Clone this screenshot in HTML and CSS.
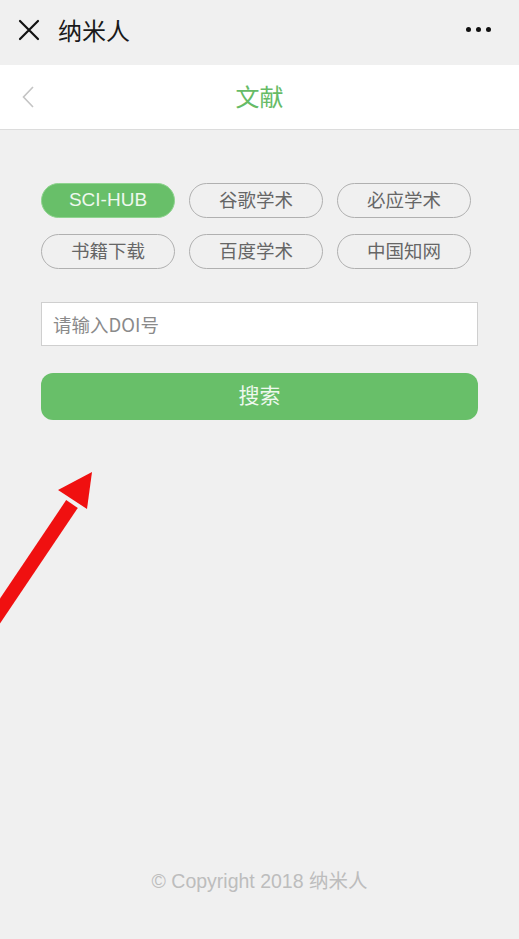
FILE: index.html
```html
<!DOCTYPE html>
<html lang="zh">
<head>
<meta charset="utf-8">
<title>文献</title>
<link rel="stylesheet" href="styles.css">
</head>
<body>
<div class="page">
  <header class="topbar">
    <svg class="close" width="22" height="22" viewBox="0 0 22 22"><path d="M2 2 L20 20 M20 2 L2 20" stroke="#111" stroke-width="2.2" stroke-linecap="round"/></svg>
    <span class="app-title">纳米人</span>
    <span class="more"><i></i><i></i><i></i></span>
  </header>
  <nav class="navbar">
    <svg class="back" width="12" height="22" viewBox="0 0 12 22"><path d="M11 1 L1.5 11 L11 21" fill="none" stroke="#c4c4c4" stroke-width="1.6"/></svg>
    <span class="nav-title">文献</span>
  </nav>
  <main class="content">
    <div class="sources">
      <button class="chip active">SCI-HUB</button>
      <button class="chip">谷歌学术</button>
      <button class="chip">必应学术</button>
      <button class="chip">书籍下载</button>
      <button class="chip">百度学术</button>
      <button class="chip">中国知网</button>
    </div>
    <input class="doi" type="text" placeholder="请输入DOI号">
    <button class="search">搜索</button>
  </main>
  <footer class="footer">© Copyright 2018 纳米人</footer>
  <svg class="arrow" width="100" height="160" viewBox="0 0 100 160">
    <path d="M-6 150 L72 34" stroke="#f01010" stroke-width="14" stroke-linecap="butt"/>
    <polygon points="92,2 58,20 87,39" fill="#f01010"/>
  </svg>
</div>
</body>
</html>
```
FILE: styles.css
```css
* { box-sizing: border-box; }
html, body { margin: 0; padding: 0; }
body {
  background: #f0f0f0;
  font-family: "Noto Sans CJK SC", "Noto Sans", sans-serif;
}
.page {
  position: relative;
  width: 519px;
  height: 939px;
  display: flex;
  flex-direction: column;
  overflow: hidden;
  background: #f0f0f0;
}
.topbar {
  height: 65px;
  flex: none;
  display: flex;
  align-items: center;
  padding: 0 28px 0 18px;
  background: #f0f0f0;
}
.close { flex: none; margin-top: -6px; }
.app-title {
  margin-left: 18px;
  font-size: 24px;
  color: #1a1a1a;
  line-height: 1;
  margin-top: -6px;
}
.more {
  margin-left: auto;
  display: flex;
  gap: 5px;
  margin-top: -6px;
}
.more i {
  display: block;
  width: 5px;
  height: 5px;
  border-radius: 50%;
  background: #111;
}
.navbar {
  position: relative;
  height: 65px;
  flex: none;
  background: #fff;
  border-bottom: 1px solid #dcdcdc;
  display: flex;
  align-items: center;
  justify-content: center;
}
.back { position: absolute; left: 22px; top: 21px; }
.nav-title {
  font-size: 24px;
  color: #66bb66;
  line-height: 1;
  margin-top: -3px;
}
.content {
  padding: 53px 41px 0 41px;
  display: flex;
  flex-direction: column;
}
.sources {
  display: grid;
  grid-template-columns: repeat(3, 134px);
  column-gap: 14px;
  row-gap: 16px;
}
.chip {
  height: 35px;
  border: 1px solid #b0b0b0;
  border-radius: 18px;
  background: transparent;
  color: #666;
  font-family: "Noto Sans CJK SC", "Noto Sans", sans-serif;
  font-size: 18.5px;
  padding: 0 0 2px;
  line-height: 1;
}
.chip.active {
  background: #68bf69;
  border-color: #8fd48f;
  color: #eef8ee;
  font-family: "Liberation Sans", "Noto Sans", sans-serif;
  font-size: 19px;
}
.doi {
  margin-top: 33px;
  width: 437px;
  height: 44px;
  border: 1px solid #cfcfcf;
  background: #fff;
  padding: 0 11px;
  font-family: "Noto Sans CJK SC", "Noto Sans", sans-serif;
  font-size: 18.5px;
  color: #333;
  outline: none;
}
.doi::placeholder { color: #8a8a8a; }
.search {
  margin-top: 27px;
  width: 437px;
  height: 47px;
  border: none;
  border-radius: 12px;
  background: #68bf69;
  color: #eef8ee;
  font-family: "Noto Sans CJK SC", "Noto Sans", sans-serif;
  font-size: 21px;
  padding: 0 0 5px;
}
.footer {
  margin-top: auto;
  padding-bottom: 47px;
  text-align: center;
  font-family: "Liberation Sans", "Noto Sans CJK SC", sans-serif;
  font-size: 19.5px;
  line-height: 22px;
  color: #bdbdbd;
}
.arrow {
  position: absolute;
  left: 0;
  top: 470px;
}
```
